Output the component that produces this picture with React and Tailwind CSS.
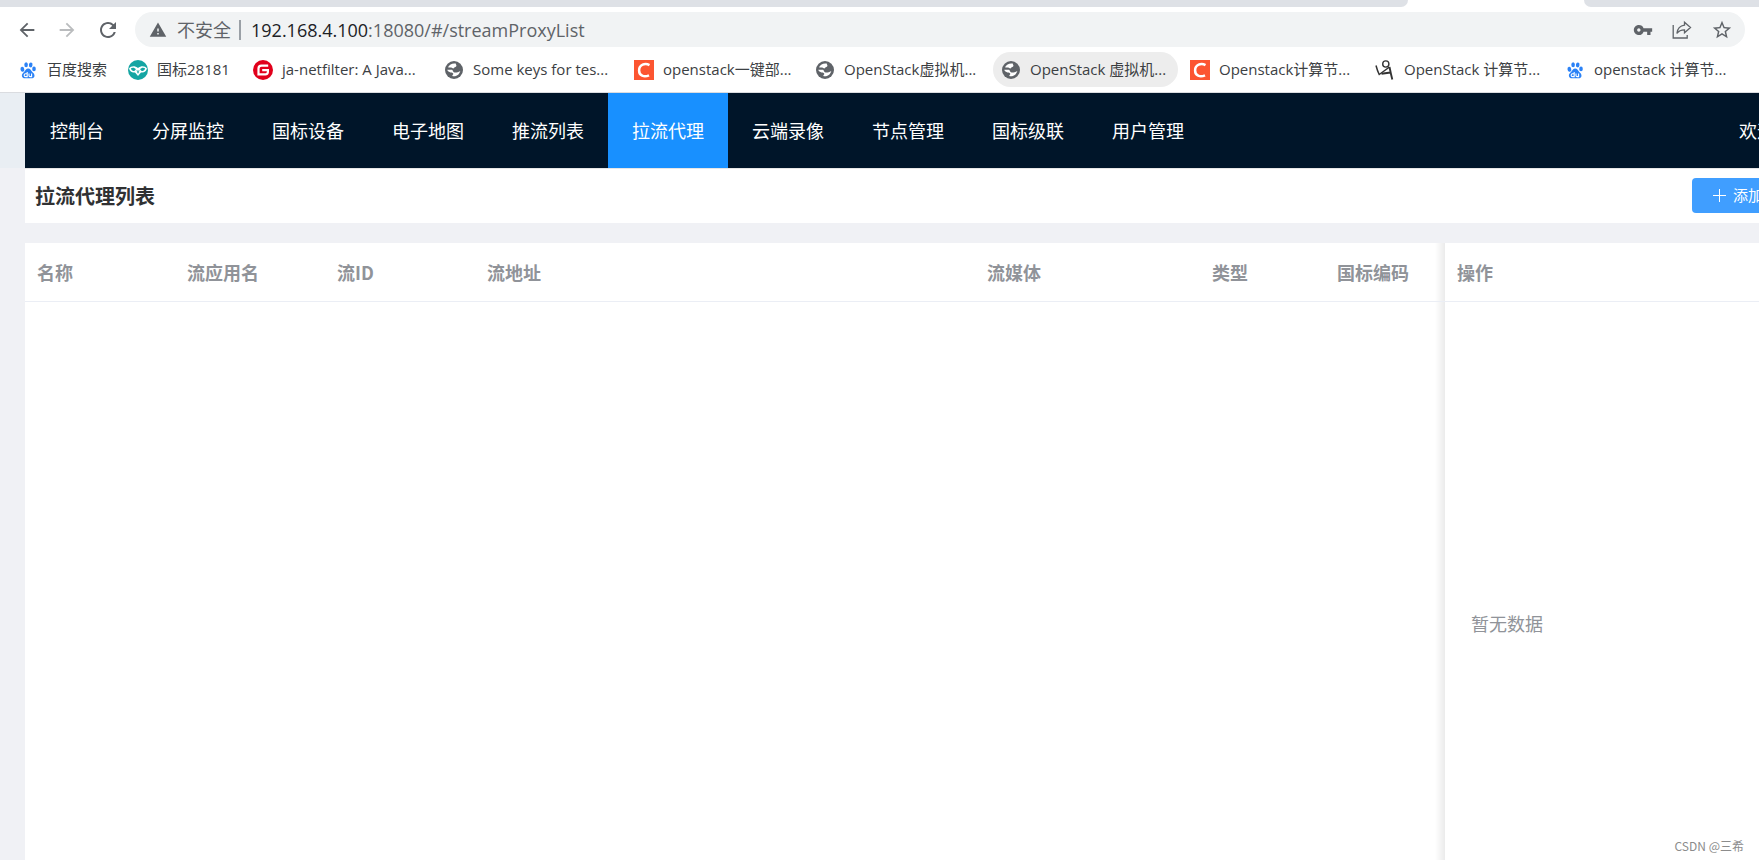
import { MdArrowBack, MdArrowForward, MdRefresh, MdWarning, MdVpnKey, MdStarBorder } from "react-icons/md";

const bookmarks = [
    { icon: "baidu", text: "百度搜索", width: "w-[106px]" },
    { icon: "gb", text: "国标28181", width: "w-[121px]" },
    { icon: "gitee", text: "ja-netfilter: A Java...", width: "w-[187px]" },
    { icon: "globe", text: "Some keys for tes...", width: "w-[186px]" },
    { icon: "csdn", text: "openstack一键部...", width: "w-[177px]" },
    { icon: "globe", text: "OpenStack虚拟机...", width: "w-[182px]" },
    { icon: "globe", text: "OpenStack 虚拟机...", width: "w-[185px]", hover: true },
    { icon: "csdn", text: "Openstack计算节...", width: "w-[181px]" },
    { icon: "runner", text: "OpenStack 计算节...", width: "w-[186px]" },
    { icon: "baidu", text: "openstack 计算节...", width: "w-[185px]" },
];

const menu = ["控制台", "分屏监控", "国标设备", "电子地图", "推流列表", "拉流代理", "云端录像", "节点管理", "国标级联", "用户管理"];

const columns = [
    { label: "名称", width: "w-[150px]" },
    { label: "流应用名", width: "w-[150px]" },
    { label: "流ID", width: "w-[150px]" },
    { label: "流地址", width: "" },
    { label: "流媒体", width: "w-[225px]" },
    { label: "类型", width: "w-[125px]" },
    { label: "国标编码", width: "w-[120px]" },
];

// soft shadow on the left side of the fixed column
const fixedShadow = "relative before:absolute before:inset-y-0 before:-left-2.5 before:w-2.5 before:bg-linear-to-r before:from-transparent before:to-black/8";

function BaiduIcon() {
    return (
        <svg viewBox="0 0 20 20" className="size-5 shrink-0">
            <g fill="#2b82f6">
                <ellipse cx="4.4" cy="9.3" rx="1.9" ry="2.5" transform="rotate(-12 4.4 9.3)" />
                <ellipse cx="8.1" cy="4.8" rx="1.8" ry="2.5" />
                <ellipse cx="12.7" cy="4.9" rx="1.8" ry="2.5" transform="rotate(10 12.7 4.9)" />
                <ellipse cx="16" cy="8.9" rx="1.8" ry="2.4" />
                <path d="M10.2 8.6c-2 0-2.6 1.8-3.9 3.1-1.4 1.4-2.7 2.3-2.4 4.2.3 1.9 1.7 2.4 3.4 2.3 1.1-.1 4.5-.1 5.7 0 1.8.1 3.3-.4 3.5-2.3.2-2-1.1-2.8-2.4-4.2-1.3-1.4-1.9-3.1-3.9-3.1z" />
            </g>
            <path d="M9.2 12v4.6H7.6a1.4 1.4 0 0 1 0-2.9h1.6M11 13.500v2c0 .8.500 1.100 1.100 1.100h1.500v-3.100" fill="none" stroke="#fff" strokeWidth="1.1" />
        </svg>
    );
}

function GbIcon() {
    return (
        <svg viewBox="0 0 20 20" className="size-5 shrink-0">
            <circle cx="10" cy="10" r="10" fill="#14a5a3" />
            <path d="M1 8.5C3 5.5 7 5.5 10 8c3-2.5 7-2.5 9 .5-.8 3.2-3.5 4.6-6 3.9L10 16l-3-3.6C4.5 13.1 1.8 11.7 1 8.5z" fill="#fff" />
            <path d="M2.8 8.6c1.4-1.4 3.6-1.3 5 .6-.8 2.4-4 2.6-5-.6zM17.2 8.6c-1.4-1.4-3.6-1.3-5 .6.8 2.400 4 2.600 5-.6z" fill="#14a5a3" />
            <path d="M9 10.200l1 3 1-3" fill="none" stroke="#14a5a3" strokeWidth=".8" />
        </svg>
    );
}

function GiteeIcon() {
    return (
        <svg viewBox="0 0 20 20" className="size-5 shrink-0">
            <circle cx="10" cy="10" r="10" fill="#e1001b" />
            <path d="M15.2 5.6H8.500a3 3 0 0 0-3 3v5.800h6.800a2.600 2.600 0 0 0 2.600-2.600v-1.600H9.200" fill="none" stroke="#fff" strokeWidth="2.2" />
        </svg>
    );
}

function CsdnIcon() {
    return (
        <svg viewBox="0 0 20 20" className="size-5 shrink-0">
            <path d="M0 0h20v20H0z" fill="#fc5531" />
            <path d="M15.500 5.100C11 2.600 5.100 4.700 5.100 10.400c0 5.200 4.900 7.300 9.900 4.900" fill="none" stroke="#fff" strokeWidth="2.5" />
        </svg>
    );
}

function RunnerIcon() {
    return (
        <svg viewBox="0 0 20 20" className="size-5 shrink-0" fill="none" stroke="#333">
            <circle cx="10.8" cy="4" r="3.1" strokeWidth="1.4" />
            <path d="M1 5.500c.8 3 1.600 6 3.200 9L14.500 7" strokeWidth="1.5" />
            <path d="M14.500 7c.8 4 1.600 8 2.800 12.500M6.500 13.800l9-1.300" strokeWidth="1.9" />
        </svg>
    );
}

function GlobeIcon() {
    return (
        <svg viewBox="0 0 20 20" className="size-5 shrink-0">
            <circle cx="10" cy="10" r="9" fill="#5f6368" />
            <path d="M12.500 3.200c.6 1.300-.2 2.300-1.500 2.500-1.200.2-1 1.600-2.200 1.700-.8.100-.6 1.300.2 1.400 1.500.2 1 1.700 2.200 2.200 1.700.6 3.600-.6 5.800-.4-.4 2.200-1.600 4-3.300 5.200-1.500 1-3.300 1.500-5 1.200l-.2-1.800c-.1-1 1.600-1 1.400-2.100-.2-1-1.500-1.200-2.600-1.200-1.500 0-1.200-1.700-2.500-1.800H2.900c0-3.700 2.900-6.800 6.600-7.100 1 0 2 0 3 .2z" fill="none" />
            <path d="M3.200 9.800h4.300c1.800 0 1.200 2.400 3 2.700 2 .3 3.500-.6 5.800-1.600-.6 2.600-2.600 4.700-5.200 5.300-1 .2-2 .1-2.800-.1 0-1.500 1.200-1.400 1-2.400-.2-1.200-1.700-1-2.700-1.300-1.600-.5-2.900-1-3.400-2.600z" fill="#fff" />
            <path d="M11.800 3.600c-3.200-.7-6.400.8-7.800 3.600 1.600.6 3-.2 4.200.8.800.7 2 .5 2.200-.4.200-.9 1.800-.6 2-1.700.2-.8-.6-1.200-.6-2.300z" fill="#fff" />
        </svg>
    );
}

function ShareIcon() {
    return (
        <svg viewBox="0 0 20 20" className="size-5" fill="none" stroke="#5f6368" strokeWidth="1.3">
            <path d="M1.200 5v13h14v-3" />
            <path d="M12.500 2.200l6 5.300-6 5.300V9.800c-3.500 0-5.800 1-7.600 3.700.5-4.500 3-7.700 7.600-8.300z" />
        </svg>
    );
}

function BookmarkIcon({ name }) {
    if (name === "baidu") return <BaiduIcon />;
    if (name === "gb") return <GbIcon />;
    if (name === "gitee") return <GiteeIcon />;
    if (name === "csdn") return <CsdnIcon />;
    if (name === "runner") return <RunnerIcon />;
    return <GlobeIcon />;
}

function Browser() {
    return (
        <div className="bg-white border-b border-[#dadce0] font-['Open_Sans','Noto_Sans_CJK_SC',sans-serif]">
            <div className="flex h-[7px]">
                <div className="grow rounded-br-lg bg-[#dee1e6]"></div>
                <div className="w-[176px]"></div>
                <div className="w-[175px] rounded-bl-lg bg-[#dee1e6]"></div>
            </div>
            <div className="flex items-center pt-[5px] pl-4 pr-[14px] text-[#5f6368]">
                <button aria-label="后退" className="w-10"><MdArrowBack className="size-[22px]" /></button>
                <button aria-label="前进" className="w-10"><MdArrowForward className="size-[22px] text-[#babcbe]" /></button>
                <button aria-label="刷新" className="w-[39px]"><MdRefresh className="size-6" /></button>
                <div className="flex grow items-center h-[35px] rounded-full bg-[#f1f3f4] pl-[14px] pr-3 text-lg">
                    <MdWarning className="size-[18px]" />
                    <span className="ml-[10px]">不安全</span>
                    <span className="ml-2 mr-[10px] h-5 w-[2px] bg-[#9aa0a6]"></span>
                    <span className="grow"><span className="text-[#202124]">192.168.4.100</span>:18080/#/streamProxyList</span>
                    <div className="flex items-center gap-[19px]">
                        <button aria-label="密码"><MdVpnKey className="size-5" /></button>
                        <button aria-label="分享"><ShareIcon /></button>
                        <button aria-label="收藏"><MdStarBorder className="size-[22px]" /></button>
                    </div>
                </div>
            </div>
            <div className="flex items-center gap-1 h-[45px] pl-[10px] text-[15px] text-[#3c4043]">
                {bookmarks.map((item, i) => (
                    <a
                        key={i}
                        href="#"
                        className={`flex shrink-0 items-center gap-[9px] h-[35px] px-2 rounded-full whitespace-nowrap ${item.width} ${item.hover ? "bg-[#ededed]" : ""}`}
                    >
                        <BookmarkIcon name={item.icon} />
                        {item.text}
                    </a>
                ))}
            </div>
        </div>
    );
}

function NavBar() {
    return (
        <div className="bg-[#e9eef3] pl-[25px]">
            <nav className="flex items-center h-[75px] -mr-6 pl-px pr-2 bg-[#001529] text-white text-lg">
                {menu.map((item) => (
                    <a
                        key={item}
                        href="#"
                        className={`flex items-center h-full px-6 pb-[2px] ${item === "拉流代理" ? "bg-[#1890ff]" : ""}`}
                    >
                        {item}
                    </a>
                ))}
                <span className="ml-auto pb-[2px]">欢迎</span>
            </nav>
        </div>
    );
}

function ProxyTable() {
    return (
        <table className="w-full table-fixed border-separate border-spacing-0 bg-white text-lg text-[#909399]">
            <thead>
                <tr className="h-[59px] text-left">
                    {columns.map((col) => (
                        <th key={col.label} className={`px-3 border-b border-[#ebeef5] font-bold ${col.width}`}>{col.label}</th>
                    ))}
                    <th className={`w-[338px] px-3 border-b border-[#ebeef5] font-bold ${fixedShadow}`}>操作</th>
                </tr>
            </thead>
            <tbody>
                <tr className="h-[642px]">
                    <td colSpan={7}></td>
                    <td className={`px-[26px] ${fixedShadow}`}>暂无数据</td>
                </tr>
            </tbody>
        </table>
    );
}

function App() {
    return (
        <div className="relative flex flex-col h-screen overflow-hidden bg-[#f0f1f5] font-['Noto_Sans_CJK_SC',sans-serif]">
            <Browser />
            <NavBar />
            <main className="pl-[25px] -mr-6">
                <div className="flex items-center justify-between h-[55px] mb-5 pl-[10px] pb-px border-t border-[#e6e6e6] bg-white">
                    <h1 className="text-xl font-bold text-[#303133]">拉流代理列表</h1>
                    <button className="flex items-center gap-[6px] h-[35px] px-5 rounded bg-[#409eff] text-white text-[15px]">
                        <svg viewBox="0 0 15 15" className="size-[15px]" stroke="currentColor">
                            <path d="M7.500 1v13M1 7.500h13" />
                        </svg>
                        添加
                    </button>
                </div>
                <ProxyTable />
            </main>
            <span className="absolute right-[15px] bottom-[6px] text-xs text-[#8c8c8c]">CSDN @三希</span>
        </div>
    );
}

export default App;
